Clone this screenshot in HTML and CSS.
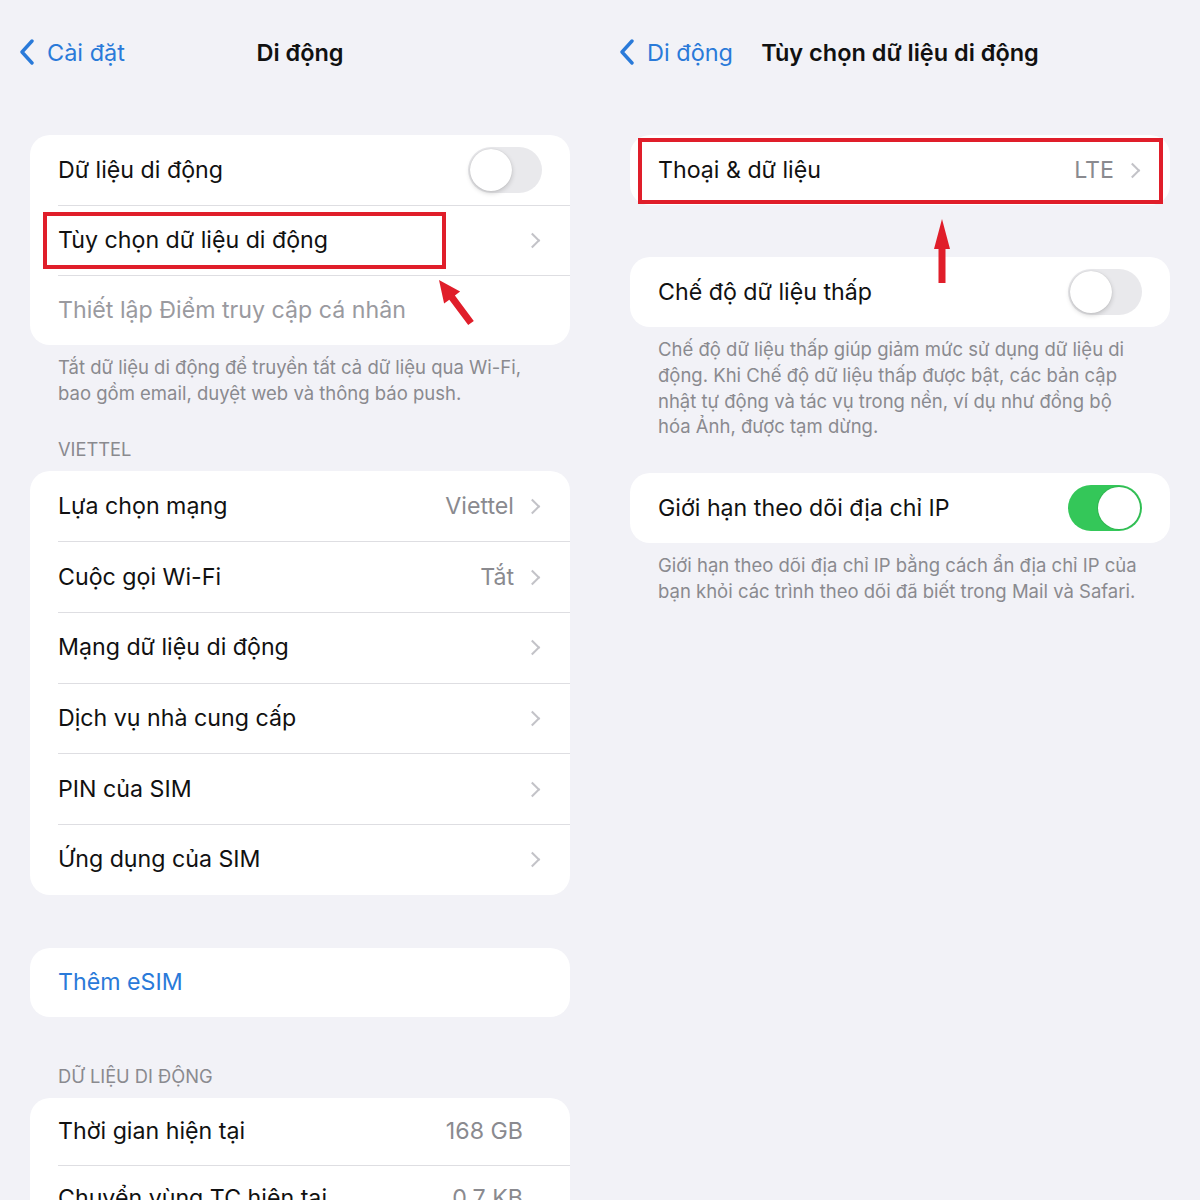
FILE: index.html
```html
<!DOCTYPE html>
<html lang="vi">
<head>
<meta charset="utf-8">
<title>Di động</title>
<link rel="stylesheet" href="styles.css">
</head>
<body>
<div class="screen">
  <section class="panel">
    <header class="nav">
      <a class="back"><svg class="back-ico" viewBox="0 0 16 26" width="16" height="26"><path d="M13 2 L3 13 L13 24" fill="none" stroke="currentColor" stroke-width="3.4" stroke-linecap="round" stroke-linejoin="round"/></svg><span>Cài đặt</span></a>
      <h1 class="title">Di động</h1>
      <span></span>
    </header>

    <div class="card card-main">
      <div class="row"><span class="label">Dữ liệu di động</span><span class="toggle"><span class="knob"></span></span></div>
      <div class="row">
        <span class="label">Tùy chọn dữ liệu di động</span><span class="chev"></span>
        <div class="redbox redbox-left"></div>
      </div>
      <div class="row"><span class="label dim">Thiết lập Điểm truy cập cá nhân</span></div>
      <svg class="arrow arrow-left" viewBox="0 0 50 55" width="50" height="55"><polygon points="9,5 30.1,16.6 24.9,20.5 43.8,45.9 38.2,50.1 19.3,24.7 14.1,28.6" fill="#e01e2a"/></svg>
    </div>
    <p class="foot">Tắt dữ liệu di động để truyền tất cả dữ liệu qua Wi-Fi, bao gồm email, duyệt web và thông báo push.</p>

    <h2 class="section">VIETTEL</h2>
    <div class="card">
      <div class="row"><span class="label">Lựa chọn mạng</span><span class="value">Viettel</span><span class="chev"></span></div>
      <div class="row"><span class="label">Cuộc gọi Wi-Fi</span><span class="value">Tắt</span><span class="chev"></span></div>
      <div class="row"><span class="label">Mạng dữ liệu di động</span><span class="chev"></span></div>
      <div class="row"><span class="label">Dịch vụ nhà cung cấp</span><span class="chev"></span></div>
      <div class="row"><span class="label">PIN của SIM</span><span class="chev"></span></div>
      <div class="row"><span class="label">Ứng dụng của SIM</span><span class="chev"></span></div>
    </div>

    <div class="card card-esim">
      <div class="row"><span class="label link">Thêm eSIM</span></div>
    </div>

    <h2 class="section section-data">DỮ LIỆU DI ĐỘNG</h2>
    <div class="card">
      <div class="row row-stat"><span class="label">Thời gian hiện tại</span><span class="value">168 GB</span></div>
      <div class="row row-stat"><span class="label">Chuyển vùng TC hiện tại</span><span class="value">0.7 KB</span></div>
    </div>
  </section>

  <section class="panel">
    <header class="nav">
      <a class="back"><svg class="back-ico" viewBox="0 0 16 26" width="16" height="26"><path d="M13 2 L3 13 L13 24" fill="none" stroke="currentColor" stroke-width="3.4" stroke-linecap="round" stroke-linejoin="round"/></svg><span>Di động</span></a>
      <h1 class="title">Tùy chọn dữ liệu di động</h1>
      <span></span>
    </header>

    <div class="card card-main">
      <div class="row"><span class="label">Thoại &amp; dữ liệu</span><span class="value">LTE</span><span class="chev"></span></div>
      <div class="redbox redbox-right"></div>
    </div>

    <div class="card card-main card-low">
      <div class="row"><span class="label">Chế độ dữ liệu thấp</span><span class="toggle"><span class="knob"></span></span></div>
      <svg class="arrow arrow-up" viewBox="0 0 20 68" width="20" height="68"><polygon points="10,2 18,32 13.5,32 13.5,66 6.5,66 6.5,32 2,32" fill="#e01e2a"/></svg>
    </div>
    <p class="foot">Chế độ dữ liệu thấp giúp giảm mức sử dụng dữ liệu di động. Khi Chế độ dữ liệu thấp được bật, các bản cập nhật tự động và tác vụ trong nền, ví dụ như đồng bộ hóa Ảnh, được tạm dừng.</p>

    <div class="card card-main card-ip">
      <div class="row"><span class="label">Giới hạn theo dõi địa chỉ IP</span><span class="toggle on"><span class="knob"></span></span></div>
    </div>
    <p class="foot foot-ip">Giới hạn theo dõi địa chỉ IP bằng cách ẩn địa chỉ IP của bạn khỏi các trình theo dõi đã biết trong Mail và Safari.</p>
  </section>
</div>
</body>
</html>
```

FILE: styles.css
```css
* { box-sizing: border-box; }

html, body {
  margin: 0;
  padding: 0;
  background: #f2f2f7;
  height: 1200px;
  overflow: hidden;
}

body {
  font-family: Inter, "Noto Sans", "Liberation Sans", sans-serif;
  color: #111;
}

.screen {
  display: flex;
  gap: 60px;
  padding: 0 30px;
}

.panel {
  width: 540px;
  flex: none;
  display: flex;
  flex-direction: column;
}

.nav {
  height: 104px;
  display: grid;
  grid-template-columns: 1fr auto 1fr;
  align-items: center;
}

.back {
  display: flex;
  align-items: center;
  gap: 12px;
  margin-left: -11px;
  color: #2a7ad9;
  font-size: 23.5px;
}

.back-ico { display: block; }

.title {
  margin: 0;
  font-size: 23.5px;
  font-weight: 600;
  color: #111;
}

.card {
  position: relative;
  background: #fff;
  border-radius: 20px;
  margin-top: 31px;
}

.row {
  position: relative;
  height: 70.67px;
  display: flex;
  align-items: center;
  padding: 0 30px 0 28px;
  font-size: 23.2px;
}
.card-main .row { height: 70px; }

.row + .row::before {
  content: "";
  position: absolute;
  top: 0;
  left: 28px;
  right: 0;
  height: 1px;
  background: #dedee2;
}

.label { flex: 1; white-space: nowrap; }
.label.dim { color: #9a9a9f; }
.label.link { color: #2a7ad9; }

.value {
  color: #8a8a8f;
  margin-right: 16px;
}

.row.row-stat { padding-right: 47px; height: 67px; }
.row-stat .value { margin-right: 0; }

.chev {
  width: 10px;
  height: 16px;
  position: relative;
}
.chev::before {
  content: "";
  position: absolute;
  left: -3px;
  top: 3px;
  width: 9px;
  height: 9px;
  border-top: 2.4px solid #c3c3c8;
  border-right: 2.4px solid #c3c3c8;
  transform: rotate(45deg);
}

.toggle {
  width: 74px;
  height: 46px;
  border-radius: 23px;
  background: #e9e9ec;
  position: relative;
  margin-right: -2px;
}
.toggle .knob {
  position: absolute;
  top: 2px;
  left: 2px;
  width: 42px;
  height: 42px;
  border-radius: 50%;
  background: #fff;
  box-shadow: 0 2px 5px rgba(0,0,0,0.18), 0 0 1px rgba(0,0,0,0.15);
}
.toggle.on { background: #34c759; }
.toggle.on .knob { left: 30px; box-shadow: 0 0 0 1px #30b650; }

.foot {
  margin: 10px 0 0;
  padding: 0 30px 0 28px;
  font-size: 18.5px;
  line-height: 25.8px;
  color: #8a8a8f;
}

.section {
  margin: 30px 0 0;
  padding-left: 28px;
  font-size: 18.3px;
  line-height: 24px;
  font-weight: 400;
  color: #8a8a8f;
  text-transform: uppercase;
}
.section + .card { margin-top: 10px; }

.card-esim { margin-top: 53px; }
.card-esim .row { height: 69px; }
.section-data { margin-top: 47px; }

.card-low { margin-top: 52px; }
.card-ip { margin-top: 33px; }

.redbox {
  position: absolute;
  border: 4px solid #e01e2a;
  pointer-events: none;
}
.redbox-left { top: 7px; left: 13px; width: 403px; height: 57px; }
.redbox-right { top: 3px; left: 8px; width: 525px; height: 66px; }

.arrow { position: absolute; display: block; }
.arrow-left { left: 400px; top: 140px; }
.arrow-up { left: 302px; top: -40px; }
```
